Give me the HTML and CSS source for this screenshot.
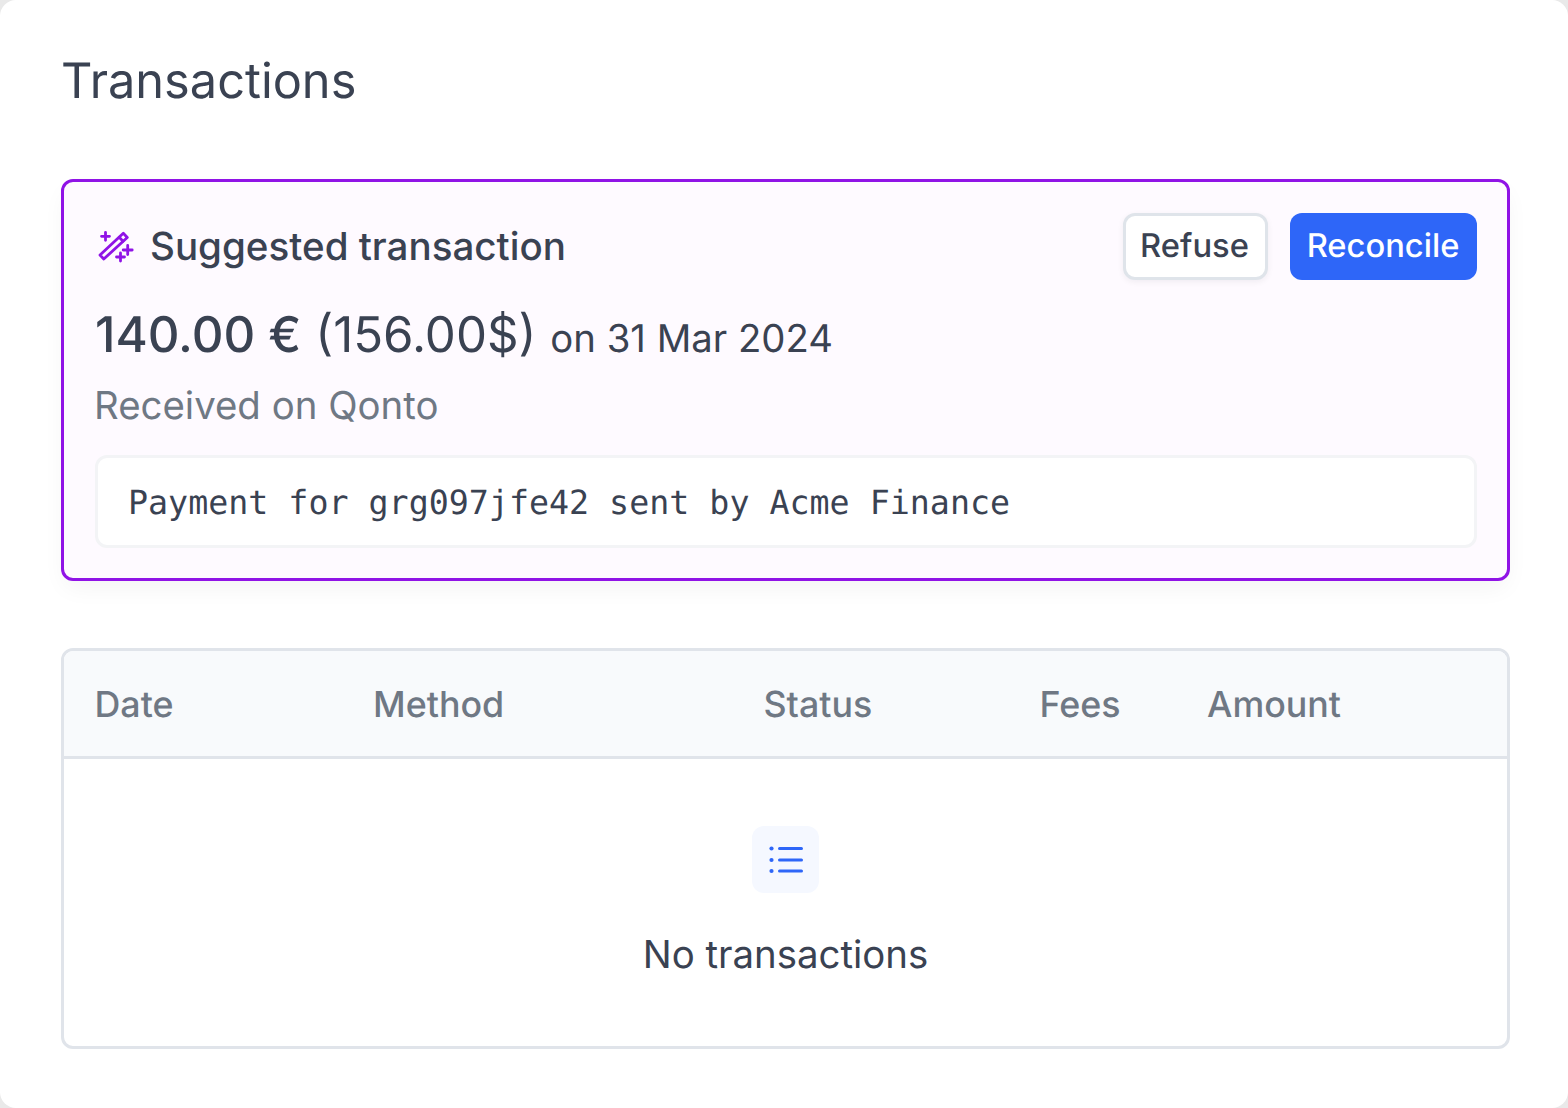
FILE: index.html
```html
<!DOCTYPE html>
<html lang="en">
<head>
<meta charset="utf-8">
<title>Transactions</title>
<link rel="stylesheet" href="styles.css">
</head>
<body>
<main class="page">
  <h1 class="title">Transactions</h1>
  <section class="suggest">
    <div class="suggest-head">
      <div class="suggest-title">
        <svg class="wand" viewBox="0 0 40 40" fill="none" stroke="currentColor" stroke-width="2.800" stroke-linecap="round" stroke-linejoin="round">
          <path d="M28.300 6.300 32.300 10.500 8.800 32 5 28Z"/>
          <path d="M24.200 10.200 28 14.200"/>
          <path d="M10.500 5.300v8M6.500 9.300h8"/>
          <path d="M32.700 18.500v9M28.200 23h9"/>
          <path d="M25.500 26v8M21.500 30h8"/>
        </svg>
        <span>Suggested transaction</span>
      </div>
      <div class="actions">
        <button class="btn btn-light">Refuse</button>
        <button class="btn btn-primary">Reconcile</button>
      </div>
    </div>
    <p class="amount"><strong>140.00 €</strong> <span class="converted">(156.00$)</span> <span class="date">on 31 Mar 2024</span></p>
    <p class="source">Received on Qonto</p>
    <div class="reference">Payment for grg097jfe42 sent by Acme Finance</div>
  </section>
  <section class="table-box">
    <div class="table-head">
      <span>Date</span>
      <span>Method</span>
      <span>Status</span>
      <span>Fees</span>
      <span>Amount</span>
    </div>
    <div class="empty">
      <div class="empty-icon">
        <svg viewBox="0 0 36 36" fill="none" stroke="currentColor" stroke-width="3" stroke-linecap="round">
          <path d="M11.500 6.500h22M11.500 18h22M11.500 29h22"/>
          <circle cx="3.500" cy="6.500" r="2.100" fill="currentColor" stroke="none"/>
          <circle cx="3.500" cy="18" r="2.100" fill="currentColor" stroke="none"/>
          <circle cx="3.500" cy="29" r="2.100" fill="currentColor" stroke="none"/>
        </svg>
      </div>
      <p class="empty-text">No transactions</p>
    </div>
  </section>
</main>
</body>
</html>
```
FILE: styles.css
```css
* { box-sizing: border-box; }
html, body { margin: 0; padding: 0; }
body {
  width: 1568px;
  height: 1108px;
  background: #e9e9e9;
  font-family: Inter, "Liberation Sans", sans-serif;
  color: #3a4252;
  overflow: hidden;
  text-rendering: geometricPrecision;
}
.page {
  height: 1108px;
  background: #fff;
  border-radius: 16px;
  padding: 49px 58px 0 61px;
}
.title {
  margin: 0 0 66px;
  font-size: 48.700px;
  line-height: 64px;
  font-weight: 400;
}
.suggest {
  height: 402px;
  background: #fefaff;
  border: 3px solid #9013e6;
  border-radius: 12px;
  padding: 31px 30px 0 31px;
  box-shadow: 0 10px 24px -4px rgba(17, 24, 39, 0.05);
}
.suggest-head {
  display: flex;
  justify-content: space-between;
  align-items: center;
  height: 67px;
}
.suggest-title {
  display: flex;
  align-items: center;
  gap: 15px;
  font-size: 38.550px;
  font-weight: 500;
}
.wand { width: 40px; height: 40px; color: #9013e6; }
.actions { display: flex; gap: 22px; }
.btn {
  height: 67px;
  border-radius: 12px;
  padding: 0 0 3px;
  font: 500 32.700px Inter, "Liberation Sans", sans-serif;
  text-rendering: geometricPrecision;
}
.btn-light {
  width: 145px;
  padding-right: 2px;
  background: #fff;
  color: #3a4252;
  border: 3px solid #dfe4ea;
  box-shadow: 0 2px 6px rgba(17, 24, 39, 0.06);
}
.btn-primary {
  width: 187px;
  padding-right: 1px;
  background: #2e66f8;
  color: #fff;
  border: 0;
}
.amount {
  margin: 22px 0 0;
  font-size: 49.200px;
  line-height: 64px;
}
.amount strong { font-weight: 500; }
.converted { font-weight: 400; }
.date { font-size: 38.300px; }
.source {
  margin: 11px 0 0 -1px;
  font-size: 38.400px;
  line-height: 48px;
  color: #6f7884;
}
.reference {
  margin-top: 25px;
  height: 93px;
  display: flex;
  align-items: center;
  background: #fff;
  border: 3px solid #f3f4f6;
  border-radius: 12px;
  padding: 2px 30px 0;
  font-family: "DejaVu Sans Mono", "Liberation Mono", monospace;
  font-size: 33.300px;
}
.table-box {
  margin-top: 67px;
  height: 401px;
  border: 3px solid #e0e4ea;
  border-radius: 12px;
  overflow: hidden;
}
.table-head {
  display: grid;
  grid-template-columns: 278.500px 390.500px 276px 167.500px 1fr;
  align-items: center;
  height: 108px;
  padding-left: 30.500px;
  background: #f8fafc;
  border-bottom: 3px solid #e0e4ea;
  font-size: 35.800px;
  font-weight: 500;
  color: #6f7884;
}
.empty {
  display: flex;
  flex-direction: column;
  align-items: center;
  padding-top: 67px;
}
.empty-icon {
  width: 67px;
  height: 67px;
  display: flex;
  align-items: center;
  justify-content: center;
  background: #f5f8ff;
  border-radius: 12px;
  color: #2e66f8;
}
.empty-icon svg { width: 36px; height: 36px; }
.empty-text {
  margin: 38px 0 0;
  font-size: 38.400px;
  line-height: 48px;
}
```
